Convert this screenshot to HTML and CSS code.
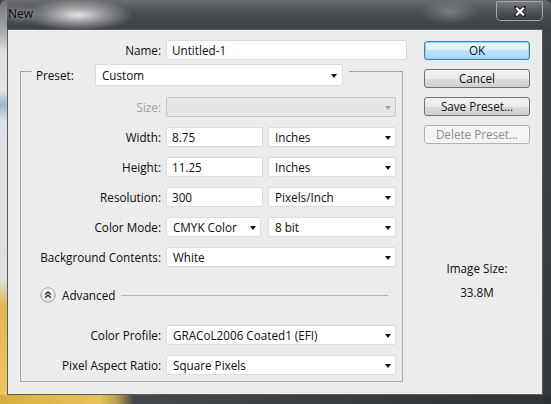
FILE: index.html
```html
<!DOCTYPE html>
<html>
<head>
<meta charset="utf-8">
<title>New</title>
<link rel="stylesheet" href="styles.css">
</head>
<body>
<div class="window">
  <div class="titlebar">
    <span class="title">New</span>
    <div class="close">
      <svg width="12" height="11" viewBox="0 0 12 11"><path d="M2 1.5 L10 9.5 M10 1.5 L2 9.5" stroke="#26292d" stroke-width="4" stroke-linecap="round" fill="none"/><path d="M2.2 1.7 L9.8 9.3 M9.8 1.7 L2.2 9.3" stroke="#ffffff" stroke-width="2.2" fill="none"/></svg>
    </div>
  </div>
  <div class="client">
    <div class="main">
      <div class="name-row">
        <span class="label">Name:</span>
        <div class="field">Untitled-1</div>
      </div>
      <div class="group">
        <div class="legend">
          <span class="legend-label">Preset:</span>
          <div class="select preset">Custom</div>
        </div>
        <div class="row first">
          <span class="label disabled">Size:</span>
          <div class="select is-disabled"></div>
        </div>
        <div class="row">
          <span class="label">Width:</span>
          <div class="pair">
            <div class="field num">8.75</div>
            <div class="select unit">Inches</div>
          </div>
        </div>
        <div class="row">
          <span class="label">Height:</span>
          <div class="pair">
            <div class="field num">11.25</div>
            <div class="select unit">Inches</div>
          </div>
        </div>
        <div class="row">
          <span class="label">Resolution:</span>
          <div class="pair">
            <div class="field num">300</div>
            <div class="select unit">Pixels/Inch</div>
          </div>
        </div>
        <div class="row">
          <span class="label">Color Mode:</span>
          <div class="pair">
            <div class="select mode">CMYK Color</div>
            <div class="select unit">8 bit</div>
          </div>
        </div>
        <div class="row">
          <span class="label">Background Contents:</span>
          <div class="select">White</div>
        </div>
        <div class="advanced">
          <svg class="adv-icon" width="16" height="16" viewBox="0 0 16 16">
            <defs>
              <linearGradient id="advg" x1="0" y1="0" x2="0" y2="1">
                <stop offset="0" stop-color="#ffffff"/>
                <stop offset="1" stop-color="#dcdcdc"/>
              </linearGradient>
            </defs>
            <circle cx="8" cy="8" r="7.2" fill="url(#advg)" stroke="#a2a2a2" stroke-width="1"/>
            <path d="M5.2 7.6 L8 4.9 L10.8 7.6 M5.2 10.8 L8 8.1 L10.8 10.8" stroke="#2b2b2b" stroke-width="1.4" fill="none"/>
          </svg>
          <span class="adv-text">Advanced</span>
          <span class="adv-line"></span>
        </div>
        <div class="row profile">
          <span class="label">Color Profile:</span>
          <div class="select">GRACoL2006 Coated1 (EFI)</div>
        </div>
        <div class="row">
          <span class="label">Pixel Aspect Ratio:</span>
          <div class="select">Square Pixels</div>
        </div>
      </div>
    </div>
    <div class="side">
      <div class="btn default">OK</div>
      <div class="btn">Cancel</div>
      <div class="btn">Save Preset...</div>
      <div class="btn btn-disabled">Delete Preset...</div>
      <div class="imgsize">Image Size:</div>
      <div class="imgsize-val">33.8M</div>
    </div>
  </div>
</div>
</body>
</html>
```
FILE: styles.css
```css
* { box-sizing: border-box; }
html, body { margin: 0; padding: 0; }
body {
  width: 551px;
  height: 404px;
  overflow: hidden;
  background: #3a3d42;
  font-family: "Open Sans", "Noto Sans", sans-serif;
  font-size: 11.7px;
  color: #0d0d0d;
}

.window {
  width: 551px;
  height: 404px;
  display: flex;
  flex-direction: column;
  border-radius: 6px 6px 0 0;
  background:
    linear-gradient(to right, #d6ad3d 0, #e8c35b 100px, #b39a50 118px, #43464a 134px, #2f3237 100%) left bottom / 100% 9px no-repeat,
    linear-gradient(to bottom, #6e7176 0, #a9acb0 32px, #dadcdf 50px, #e3e5e7 90px, #9fb7cd 104px, #dde1e5 122px, #dfdfdc 280px, #dcb955 305px, #ecc863 100%) left top / 7px 100% no-repeat,
    radial-gradient(ellipse 55px 16px at 78px 15px, rgba(255,255,255,0.85), rgba(255,255,255,0.35) 55%, rgba(255,255,255,0)) no-repeat,
    radial-gradient(ellipse 30px 12px at 450px 12px, rgba(150,152,156,0.6), rgba(150,152,156,0)) no-repeat,
    linear-gradient(to bottom, #6a6d72 0, #4b4e53 12px, #3e4146 29px, #35383d 100%);
}

.titlebar {
  height: 29px;
  display: flex;
  justify-content: space-between;
  align-items: flex-start;
}
.title {
  padding-left: 8px;
  line-height: 28px;
  font-size: 12px;
  color: #0a0a0a;
  text-shadow: 0 0 6px rgba(215,215,215,0.9), 0 0 10px rgba(200,200,200,0.8);
}
.close {
  width: 47px;
  height: 20px;
  margin: 1px 8px 0 0;
  border: 1px solid rgba(190,192,196,0.75);
  border-radius: 2px 2px 5px 5px;
  background: linear-gradient(to bottom, rgba(255,255,255,0.12), rgba(0,0,0,0.15));
  display: flex;
  align-items: center;
  justify-content: center;
}

.client {
  flex: 1;
  margin: 0 8px 9px 7px;
  background: #ececec;
  border: 1px solid #585b60;
  display: flex;
  padding-top: 10px;
}

.main { width: 399px; }

.label {
  text-align: right;
  white-space: nowrap;
  line-height: 20px;
}
.label.disabled { color: #a3a3a3; }

.name-row {
  display: grid;
  grid-template-columns: 153px 241px;
  column-gap: 5px;
  align-items: center;
}

.field, .select {
  height: 20px;
  background: #ffffff;
  border: 1px solid #dcdcdc;
  border-radius: 2px;
  padding-left: 5px;
  line-height: 18px;
  white-space: nowrap;
  overflow: hidden;
  position: relative;
}
.select { padding-left: 6px; }
.select::after {
  content: "";
  position: absolute;
  right: 4px;
  top: 8px;
  border-left: 3px solid transparent;
  border-right: 3px solid transparent;
  border-top: 4px solid #111;
}
.select.is-disabled {
  background: #e6e6e6;
  border-color: #c6c6c6;
}
.select.is-disabled::after { border-top-color: #a6a6a6; }

.group {
  width: 383px;
  margin: 11px 0 0 12px;
  border: 1px solid #a5a5a5;
  padding: 0 6px 6px 0;
}
.legend {
  display: flex;
  align-items: center;
  width: fit-content;
  margin: -8px 0 0 11px;
  padding: 0 6px 0 4px;
  background: #ececec;
}
.legend-label { width: 59px; }
.select.preset {
  width: 248px;
  height: 22px;
  line-height: 20px;
}
.select.preset::after { right: 5px; top: 9px; }

.row {
  display: grid;
  grid-template-columns: 140px 230px;
  column-gap: 5px;
  align-items: center;
  margin-top: 10px;
}
.row.first { margin-top: 11px; }
.row.profile { margin-top: 20px; }

.pair {
  display: flex;
  justify-content: space-between;
}
.field.num { width: 97px; }
.select.unit { width: 128px; }
.select.mode { width: 95px; }

.advanced {
  display: flex;
  align-items: center;
  height: 20px;
  margin-top: 18px;
  padding-left: 19px;
}
.adv-icon { display: block; }
.adv-text { margin-left: 6px; }
.adv-line {
  flex: 1;
  height: 1px;
  background: #b3b3b3;
  margin: 0 8px 0 6px;
}

.side {
  width: 106px;
  margin-left: 17px;
  padding-top: 1px;
  display: flex;
  flex-direction: column;
}
.btn {
  height: 19px;
  margin-bottom: 9px;
  border: 1px solid #707070;
  border-radius: 3px;
  background: linear-gradient(to bottom, #f2f2f2 0, #ebebeb 50%, #dddddd 50%, #cfcfcf 100%);
  text-align: center;
  line-height: 17px;
  color: #111;
}
.btn.default {
  border-color: #3c7fb1;
  background: linear-gradient(to bottom, #eaf6fd 0, #d9f0fc 50%, #bee6fd 50%, #a7d9f5 100%);
  box-shadow: inset 0 0 0 1px #8fd3f5;
}
.btn.btn-disabled {
  border-color: #adb2b5;
  background: #f4f4f4;
  color: #8d8d8d;
}
.imgsize {
  margin-top: 107px;
  text-align: center;
  line-height: 16px;
}
.imgsize-val {
  margin-top: 8px;
  text-align: center;
  line-height: 16px;
}
```
